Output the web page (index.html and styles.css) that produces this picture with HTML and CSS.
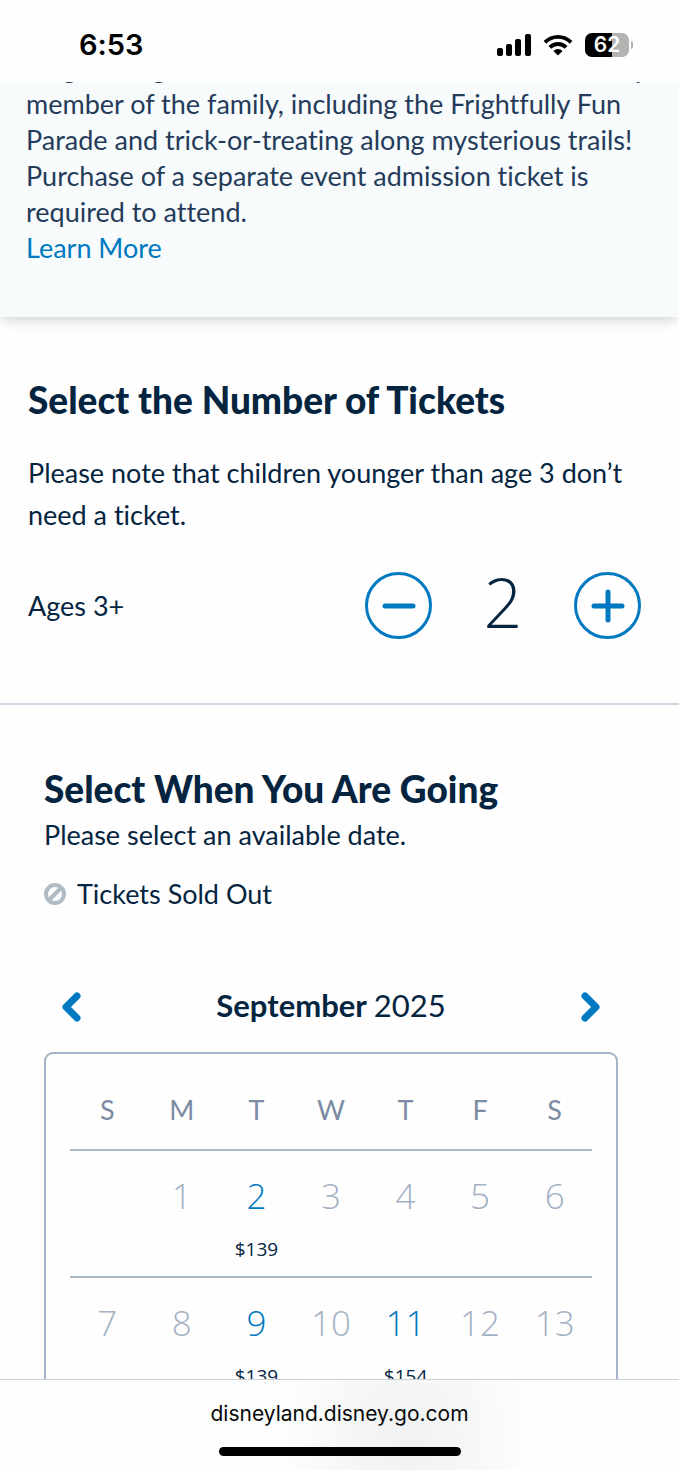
FILE: index.html
```html
<!DOCTYPE html>
<html lang="en">
<head>
  <meta charset="UTF-8" />
  <meta name="viewport" content="width=device-width, initial-scale=1" />
  <title>Select Tickets</title>
  <link rel="stylesheet" href="styles.css">
</head>
<body>
  <header class="status-bar">
    <time class="clock">6:53</time>
    <div class="status-icons">
      <svg width="34" height="22" viewBox="0 0 34 22" aria-hidden="true">
        <rect x="0" y="14" width="6" height="8" rx="2"/>
        <rect x="9" y="10" width="6" height="12" rx="2"/>
        <rect x="18" y="5" width="6" height="17" rx="2"/>
        <rect x="28" y="0" width="6" height="22" rx="2"/>
      </svg>
      <svg width="30" height="22" viewBox="0 0 30 22" aria-hidden="true">
        <path d="M0.6 6.9a20.4 20.4 0 0 1 28.8 0l-2.7 2.8a16.5 16.5 0 0 0-23.4 0z"/>
        <path d="M5.5 11.9a13.4 13.4 0 0 1 19 0l-2.8 2.8a9.5 9.5 0 0 0-13.4 0z"/>
        <path d="M10.4 16.9a6.5 6.5 0 0 1 9.2 0L15 21.6z"/>
      </svg>
      <div class="battery"><span>62</span></div>
    </div>
  </header>

  <main class="page">
    <section class="intro">
      <p>Oogie Boogie Bash features Halloween fun for every member of the family, including the Frightfully Fun Parade and trick-or-treating along mysterious trails! Purchase of a separate event admission ticket is required to attend.</p>
      <a href="#">Learn More</a>
    </section>

    <section class="tickets">
      <h2>Select the Number of Tickets</h2>
      <p>Please note that children younger than age 3 don’t need a ticket.</p>
      <div class="ticket-row">
        <span>Ages 3+</span>
        <div class="stepper">
          <button type="button" class="round-btn" aria-label="Remove ticket">
            <svg width="34" height="34" viewBox="0 0 34 34"><path d="M3 17h28"/></svg>
          </button>
          <output class="count">2</output>
          <button type="button" class="round-btn" aria-label="Add ticket">
            <svg width="34" height="34" viewBox="0 0 34 34"><path d="M3 17h28M17 3v28"/></svg>
          </button>
        </div>
      </div>
    </section>

    <section class="dates">
      <h2>Select When You Are Going</h2>
      <p>Please select an available date.</p>
      <div class="legend">
        <svg width="22" height="22" viewBox="0 0 22 22" aria-hidden="true">
          <circle cx="11" cy="11" r="9"/>
          <path d="M5 17L17 5"/>
        </svg>
        <span>Tickets Sold Out</span>
      </div>

      <div class="month-nav">
        <button type="button" class="arrow" aria-label="Previous month">
          <svg width="19" height="30" viewBox="0 0 19 30"><path d="M15 4L4 15l11 11"/></svg>
        </button>
        <h3>September <span>2025</span></h3>
        <button type="button" class="arrow" aria-label="Next month">
          <svg width="19" height="30" viewBox="0 0 19 30"><path d="M4 4l11 11L4 26"/></svg>
        </button>
      </div>

      <div class="calendar">
        <table>
          <thead>
            <tr><th>S</th><th>M</th><th>T</th><th>W</th><th>T</th><th>F</th><th>S</th></tr>
          </thead>
          <tbody>
            <tr>
              <td></td>
              <td>1</td>
              <td><button type="button" class="day">2<span class="price">$139</span></button></td>
              <td>3</td>
              <td>4</td>
              <td>5</td>
              <td>6</td>
            </tr>
            <tr>
              <td>7</td>
              <td>8</td>
              <td><button type="button" class="day">9<span class="price">$139</span></button></td>
              <td>10</td>
              <td><button type="button" class="day">11<span class="price">$154</span></button></td>
              <td>12</td>
              <td>13</td>
            </tr>
          </tbody>
        </table>
      </div>
    </section>
  </main>

  <footer class="browser-bar">
    <span>disneyland.disney.go.com</span>
    <div class="home-indicator"></div>
  </footer>
</body>
</html>
```
FILE: styles.css
```css
* {
  box-sizing: border-box;
}
body {
  margin: 0;
  height: 100vh;
  display: flex;
  flex-direction: column;
  font-family: Lato, "Open Sans", sans-serif;
  font-size: 27px;
  line-height: 42px;
  font-variant-ligatures: none;
  color: #04243f;
  background: #fefefe;
}
h2, h3, p {
  margin: 0;
}
h2 {
  font-size: 37px;
  font-weight: 900;
}
button {
  padding: 0;
  border: none;
  background: none;
  font: inherit;
  color: #0079c1;
  cursor: pointer;
}
svg {
  display: block;
}

/* status bar */
.status-bar {
  flex: none;
  height: 82px;
  padding: 8px 50px 0 79px;
  display: flex;
  align-items: center;
  justify-content: space-between;
  font-family: Inter, sans-serif;
  color: #000;
}
.clock {
  font-size: 29px;
  font-weight: 600;
}
.status-icons {
  display: flex;
  align-items: center;
  gap: 12px;
}
.battery {
  position: relative;
  width: 44px;
  height: 24px;
  border-radius: 7px;
  background: linear-gradient(to right, #000 62%, #b3b3b3 62%);
  color: #fff;
  font-size: 21px;
  font-weight: 600;
  line-height: 24px;
  text-align: center;
}
.battery::after {
  content: "";
  position: absolute;
  left: 46px;
  top: 8px;
  width: 2px;
  height: 8px;
  border-radius: 0 4px 4px 0;
  background: #b3b3b3;
}

/* scrolled page */
.page {
  flex: 1;
  min-height: 0;
  overflow: hidden;
}
.intro {
  margin-top: -32px;
  padding: 0 26px 51px;
  line-height: 36px;
  color: #253b5a;
  background: #f7fbfc;
  box-shadow: 0 6px 12px -3px rgba(0, 0, 0, 0.18);
}
.intro a {
  color: #0079c1;
  text-decoration: none;
}
.tickets {
  padding: 62px 38px 64px 28px;
  border-bottom: 2px solid #cdd6e3;
}
.tickets p {
  margin-top: 31px;
}
.ticket-row {
  display: flex;
  align-items: center;
  justify-content: space-between;
  margin-top: 36px;
}
.stepper {
  display: flex;
  align-items: center;
}
.round-btn {
  display: flex;
  align-items: center;
  justify-content: center;
  width: 67px;
  height: 67px;
  border: 3px solid #0079c1;
  border-radius: 50%;
}
.round-btn svg {
  fill: none;
  stroke: #0079c1;
  stroke-width: 5;
  stroke-linecap: round;
}
.count {
  width: 142px;
  padding-bottom: 8px;
  font-family: "Open Sans", sans-serif;
  font-size: 68px;
  font-weight: 300;
  line-height: 59px;
  text-align: center;
}

/* date picker */
.dates {
  padding: 63px 61px 0 44px;
}
.dates p {
  margin-top: 4px;
}
.legend {
  display: flex;
  align-items: center;
  gap: 11px;
  margin-top: 17px;
}
.legend svg {
  fill: none;
  stroke: #afbcc4;
  stroke-width: 4;
}
.month-nav {
  display: flex;
  align-items: center;
  justify-content: space-between;
  margin-top: 69px;
  padding: 0 18px;
}
.month-nav h3 {
  padding-bottom: 4px;
  font-size: 31px;
  font-weight: 700;
}
.month-nav h3 span {
  font-weight: 400;
}
.arrow svg {
  fill: none;
  stroke: #0079c1;
  stroke-width: 7;
  stroke-linecap: round;
  stroke-linejoin: round;
}
.calendar {
  margin-top: 22px;
  padding: 35px 24px;
  border: 2px solid #a3b3c8;
  border-radius: 9px;
}
table {
  width: 100%;
  table-layout: fixed;
  border-collapse: separate;
  border-spacing: 0;
}
th {
  padding: 0 0 18px;
  border-bottom: 2px solid #a9bac6;
  font-weight: 400;
  color: #7b8ba3;
}
td {
  height: 127px;
  padding: 24px 0 15px;
  border-bottom: 2px solid #a9bac6;
  font-family: "Open Sans", sans-serif;
  font-size: 35px;
  font-weight: 300;
  text-align: center;
  vertical-align: top;
  color: #a3b1c4;
}
.day {
  display: block;
  width: 100%;
}
.price {
  display: block;
  margin-top: 20px;
  font-size: 19px;
  font-weight: 400;
  line-height: 24px;
  color: #04243f;
}

/* bottom browser bar */
.browser-bar {
  flex: none;
  display: flex;
  flex-direction: column;
  align-items: center;
  height: 91px;
  padding: 13px 0;
  border-top: 1px solid #d0d0d2;
  background: radial-gradient(ellipse 120px 160px at 60% 70%, #eff1f2, #fcfdfd);
  font-family: Inter, sans-serif;
  font-size: 21px;
  color: #0a0a0a;
}
.home-indicator {
  width: 242px;
  height: 9px;
  margin-top: 12px;
  border-radius: 5px;
  background: #000;
}
```
